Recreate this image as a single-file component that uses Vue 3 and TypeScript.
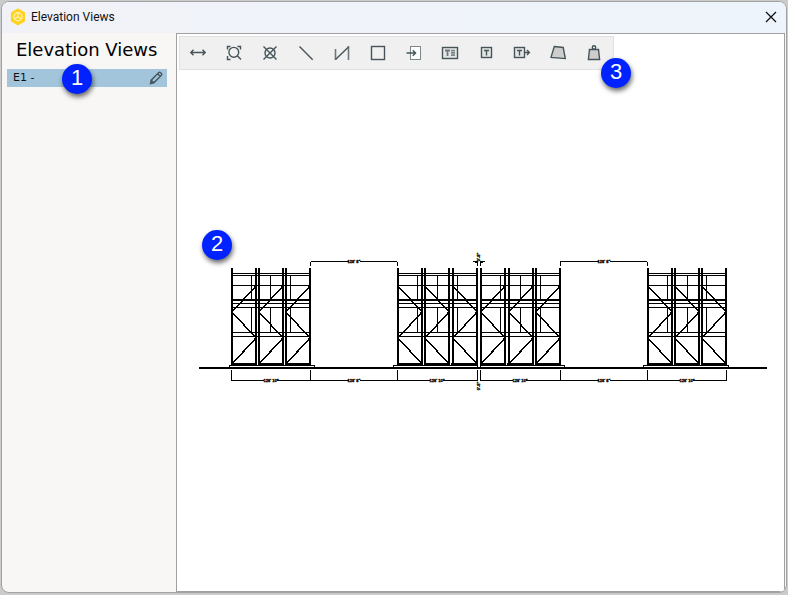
<script setup lang="ts">
import { ref } from 'vue'

interface Tool {
  name: string
  label: string
}

interface Tower {
  posts: number[]
  studs: number[]
  bays: [number, number][]
  base: [number, number]
}

interface Dimension {
  x: number
  y: number
  text: string
}

const tools: Tool[] = [
  { name: 'dimension', label: 'Dimension' },
  { name: 'zoom', label: 'Zoom to fit' },
  { name: 'target', label: 'Marker' },
  { name: 'line', label: 'Line' },
  { name: 'polyline', label: 'Polyline' },
  { name: 'rectangle', label: 'Rectangle' },
  { name: 'insert', label: 'Insert' },
  { name: 'textblock', label: 'Text block' },
  { name: 'text', label: 'Text' },
  { name: 'leader', label: 'Text with leader' },
  { name: 'shape', label: 'Shape' },
  { name: 'weight', label: 'Weight' },
]

const towers: Tower[] = [
  {
    posts: [231, 255, 258, 282, 285, 309],
    studs: [251, 270, 290],
    bays: [[256, 232], [283, 259], [310, 286]],
    base: [229, 315],
  },
  {
    posts: [397, 421, 424, 448, 452, 476],
    studs: [417, 437, 457],
    bays: [[398, 422], [425, 449], [453, 477]],
    base: [393, 478],
  },
  {
    posts: [480, 504, 508, 532, 535, 559],
    studs: [500, 520, 540],
    bays: [[505, 481], [533, 509], [560, 536]],
    base: [480, 565],
  },
  {
    posts: [647, 671, 674, 698, 701, 725],
    studs: [667, 687, 706],
    bays: [[648, 672], [675, 699], [702, 726]],
    base: [643, 729],
  },
]

const beams: { y: number; h: number }[] = [
  { y: 273, h: 1 },
  { y: 275, h: 1 },
  { y: 285, h: 1 },
  { y: 299, h: 2 },
  { y: 303, h: 1 },
  { y: 307, h: 1 },
  { y: 332, h: 1 },
  { y: 336, h: 1 },
  { y: 363, h: 2 },
  { y: 365, h: 1 },
]

const ticks: number[] = [231, 310, 397, 477, 480, 560, 647, 726]

const dimensions: Dimension[] = [
  { x: 271, y: 380, text: '128\' 10"' },
  { x: 354, y: 380, text: '128\' 8"' },
  { x: 437, y: 380, text: '128\' 10"' },
  { x: 520, y: 380, text: '128\' 10"' },
  { x: 604, y: 380, text: '128\' 8"' },
  { x: 687, y: 380, text: '128\' 10"' },
  { x: 354, y: 261, text: '128\' 8"' },
  { x: 604, y: 261, text: '128\' 8"' },
]

const activeTool = ref('')

function brace(bay: [number, number]): string {
  const [a, b] = bay
  return `${a},286 ${b},312 ${a},338 ${b},364`
}
</script>

<template>
  <div class="desktop">
    <div class="window">
      <header class="titlebar">
        <svg class="logo" viewBox="0 0 16 18" aria-hidden="true">
          <path d="M8 1.2 14.4 4.8V12.8L8 16.6 1.6 12.8V4.8Z" fill="#ffd21f" stroke="#ffd21f" stroke-width="1.4" stroke-linejoin="round" />
          <circle cx="8" cy="8.8" r="4.1" fill="none" stroke="#fff6c4" stroke-width="1.2" />
          <path d="M8 5v3.6L4.8 11M8 8.6l3.2 2.4" fill="none" stroke="#fff6c4" stroke-width="1.1" />
        </svg>
        <span class="caption">Elevation Views</span>
        <button class="close" type="button" aria-label="Close">
          <svg viewBox="0 0 12 12"><path d="M1 1 11 11M11 1 1 11" /></svg>
        </button>
      </header>
      <div class="body">
        <aside class="sidebar">
          <h1>Elevation Views</h1>
          <div class="view-row">
            <a class="view-name" href="#e1">E1 -</a>
            <button class="edit" type="button" aria-label="Edit view">
              <svg viewBox="0 0 14 14">
                <path d="M1.5 12.5 2.2 9.2 9.8 1.6Q10.6.9 11.5 1.7L12.3 2.5Q13.1 3.4 12.4 4.2L4.8 11.8ZM2.2 9.2 4.8 11.8M8.6 2.8 11.2 5.4" />
              </svg>
            </button>
            <span class="badge badge-one">1</span>
          </div>
        </aside>
        <main class="canvas">
          <div class="toolbar" role="toolbar">
            <button
              v-for="tool in tools"
              :key="tool.name"
              class="tool"
              type="button"
              :aria-label="tool.label"
              @click="activeTool = tool.name"
            >
              <svg class="icon" viewBox="0 0 24 24">
                <path v-if="tool.name === 'dimension'" d="M5 11.5H19M7.5 8.8 4.8 11.5 7.5 14.2M16.5 8.8 19.2 11.5 16.5 14.2" />
                <template v-else-if="tool.name === 'zoom'">
                  <circle cx="11.8" cy="11.3" r="4.9" />
                  <path d="M15.3 14.8 19 18.6M5.5 8.5V5.5H8.5M15.5 5.5H18.5V8.5M5.5 15V18.5H8.5" />
                </template>
                <template v-else-if="tool.name === 'target'">
                  <circle cx="12" cy="12" r="5" />
                  <path d="M5.5 5.5 18.5 18.5M18.5 5.5 5.5 18.5" />
                </template>
                <path v-else-if="tool.name === 'line'" d="M5.5 5.5 18.7 18.7" />
                <template v-else-if="tool.name === 'polyline'">
                  <path class="soft" d="M5.5 8V19M18.5 5V19" />
                  <path d="M5.5 18.5 18.5 6" />
                </template>
                <rect v-else-if="tool.name === 'rectangle'" x="5.5" y="5.5" width="13" height="13" />
                <template v-else-if="tool.name === 'insert'">
                  <rect class="sheet" x="8.5" y="5.5" width="10" height="13" />
                  <path d="M4.5 12H13.5M10.8 9.2 13.6 12 10.8 14.8" />
                </template>
                <template v-else-if="tool.name === 'textblock'">
                  <rect class="pale" x="4.5" y="6.5" width="15" height="11" />
                  <path class="letter" d="M7 9.5H12M9.5 9.5V15" />
                  <path class="bars" d="M13 9.7H17M13 11.9H17M13 14.1H17" />
                </template>
                <template v-else-if="tool.name === 'text'">
                  <rect class="pale" x="7.5" y="6.5" width="10" height="10" />
                  <path d="M10 9.5H15M12.5 9.5V14.5" />
                </template>
                <template v-else-if="tool.name === 'leader'">
                  <rect class="pale" x="4.5" y="6.5" width="10" height="10" />
                  <path d="M7 9.5H12M9.5 9.5V14.5M14.5 11.5H19M17 9 19.4 11.5 17 14" />
                </template>
                <path v-else-if="tool.name === 'shape'" class="filled" d="M8.3 5.5 17.2 6.5 19.3 17.6 5 16.4Z" />
                <template v-else>
                  <circle cx="12" cy="6.4" r="1.7" />
                  <path class="filled" d="M7.5 8.5H16.5L17.6 18.5H6.4Z" />
                </template>
              </svg>
            </button>
            <span class="badge badge-three">3</span>
          </div>
          <svg class="drawing" viewBox="177 71 607 520" role="img" aria-label="Elevation drawing E1">
            <rect x="199" y="367" width="568" height="2" />
            <g v-for="(tower, t) in towers" :key="t">
              <rect v-for="x in tower.posts" :key="x" :x="x" y="268" width="2" height="97" />
              <rect
                v-for="beam in beams"
                :key="beam.y"
                :x="tower.posts[0]"
                :y="beam.y"
                :width="tower.posts[5] + 2 - tower.posts[0]"
                :height="beam.h"
              />
              <template v-for="x in tower.studs" :key="x">
                <rect :x="x" y="276" width="1" height="23" />
                <rect :x="x" y="307" width="1" height="25" />
              </template>
              <polyline v-for="bay in tower.bays" :key="bay[0]" :points="brace(bay)" />
              <rect :x="tower.base[0]" y="365" :width="tower.base[1] - tower.base[0]" height="1" />
              <rect :x="tower.base[0]" y="365" width="1" height="2" />
              <rect :x="tower.base[1] - 1" y="365" width="1" height="2" />
            </g>
            <g class="gaps">
              <rect v-for="x in [257, 284, 423, 450, 506, 534, 673, 700]" :key="x" :x="x" y="362" width="1" height="3" />
            </g>
            <rect x="231" y="380" width="247" height="1" />
            <rect x="480" y="380" width="247" height="1" />
            <rect v-for="x in ticks" :key="x" :x="x" y="370" width="1" height="11" />
            <path class="thin" d="M310.5 266V262.5L311.5 261.5H396.5L397.5 262.5V266M560.5 266V261.5H646.5L647.5 262.5V266M473 261.5H477.5V266M485 261.5H480.5V266M475 262.5H477M481 262.5H483" />
            <g class="marks">
              <template v-for="(dim, i) in dimensions" :key="i">
                <rect :x="dim.x - (dim.text.length > 7 ? 7 : 5)" :y="dim.y - 2" :width="dim.text.length > 7 ? 13 : 11" height="5" />
                <text :x="dim.x" :y="dim.y + 2">{{ dim.text }}</text>
              </template>
              <text transform="translate(480 257) rotate(-90)">0'-8"</text>
              <text transform="translate(480 386) rotate(-90)">0'-8"</text>
            </g>
          </svg>
          <span class="badge badge-two">2</span>
        </main>
      </div>
    </div>
  </div>
</template>

<style>
body {
  margin: 0;
  background: #cbcbcb;
}
</style>

<style scoped>
.desktop {
  display: flex;
  box-sizing: border-box;
  height: 100vh;
  padding: 1px 1px 2px;
  background: #cbcbcb;
}

.window {
  display: flex;
  flex: 1;
  flex-direction: column;
  overflow: hidden;
  border: 1px solid #a3a3a3;
  border-radius: 8px;
  background: #f8f7f5;
}

.titlebar {
  display: flex;
  flex: 0 0 31px;
  align-items: center;
  box-sizing: border-box;
  padding: 0 7px 2px 8px;
  background: linear-gradient(90deg, #f1f2f8, #eef4fb);
}

.logo {
  width: 16px;
  height: 18px;
  margin-right: 5px;
}

.caption {
  flex: 1;
  color: #111;
  font: 12px/16px Roboto, "Open Sans", sans-serif;
}

button {
  padding: 0;
  border: 0;
  background: transparent;
}

.close {
  display: flex;
  padding: 2px;
}

.close svg {
  width: 12px;
  height: 12px;
  fill: none;
  stroke: #111;
  stroke-width: 1.3;
}

.body {
  display: flex;
  flex: 1;
  min-height: 0;
  padding-right: 1px;
}

.sidebar {
  flex: 0 0 174px;
  font-family: "DejaVu Sans", Verdana, sans-serif;
}

h1 {
  margin: 5px 0 7px 14px;
  color: #000;
  font-size: 18px;
  font-weight: 400;
  line-height: 24px;
  white-space: nowrap;
}

.view-row {
  position: relative;
  display: flex;
  align-items: center;
  justify-content: space-between;
  height: 18px;
  margin: 0 9px 0 5px;
  padding: 0 4px 0 6px;
  background: #a3c5db;
}

.view-name {
  color: #111;
  font-size: 11px;
  line-height: 18px;
  text-decoration: none;
}

.edit {
  display: flex;
}

.edit svg {
  width: 14px;
  height: 14px;
  fill: none;
  stroke: #46545c;
  stroke-width: 1.4;
}

.canvas {
  position: relative;
  display: flex;
  flex: 1;
  flex-direction: column;
  align-items: flex-start;
  min-width: 0;
  border: 1px solid #a0a0a0;
  background: #fff;
}

.toolbar {
  position: relative;
  display: flex;
  margin: 2px 2px 1px;
  padding-right: 1px;
  border: 1px solid #e0e0e0;
  background: #f0f0f0;
}

.tool {
  display: flex;
  align-items: center;
  justify-content: center;
  width: 36px;
  height: 32px;
}

.icon {
  width: 24px;
  height: 24px;
  fill: none;
  stroke: #46545a;
  stroke-width: 1.4;
}

.icon .soft {
  stroke: #6d777c;
  stroke-width: 1.6;
}

.icon .sheet {
  fill: #fff;
  stroke: #7d888c;
  stroke-width: 1;
}

.icon .pale {
  fill: #e4e6e6;
}

.icon .letter {
  stroke: #6f787c;
  stroke-width: 1.8;
}

.icon .bars {
  stroke: #7d868a;
  stroke-width: 1.7;
}

.icon .filled {
  fill: #cdcdcd;
}

.drawing {
  flex: 1;
  width: 100%;
  min-height: 0;
  fill: #000;
  shape-rendering: crispEdges;
}

.drawing polyline {
  fill: none;
  stroke: #000;
  stroke-width: 1.5;
}

.drawing .thin {
  fill: none;
  stroke: #000;
  stroke-width: 1;
}

.drawing .gaps rect,
.drawing .marks rect {
  fill: #fff;
}

.drawing text {
  font: bold 4px "Liberation Sans", Arial, sans-serif;
  stroke: #000;
  stroke-width: 0.3;
  text-anchor: middle;
}

.badge {
  position: absolute;
  width: 30px;
  height: 30px;
  border-radius: 50%;
  background: #0022ff;
  box-shadow: 1px 3px 5px rgba(0, 0, 0, 0.6);
  color: #fff;
  font: 22px/28px "Liberation Sans", Arial, sans-serif;
  text-align: center;
}

.badge-one {
  top: -5px;
  left: 55px;
}

.badge-two {
  top: 196px;
  left: 25px;
}

.badge-three {
  top: 21px;
  right: -18px;
}
</style>
